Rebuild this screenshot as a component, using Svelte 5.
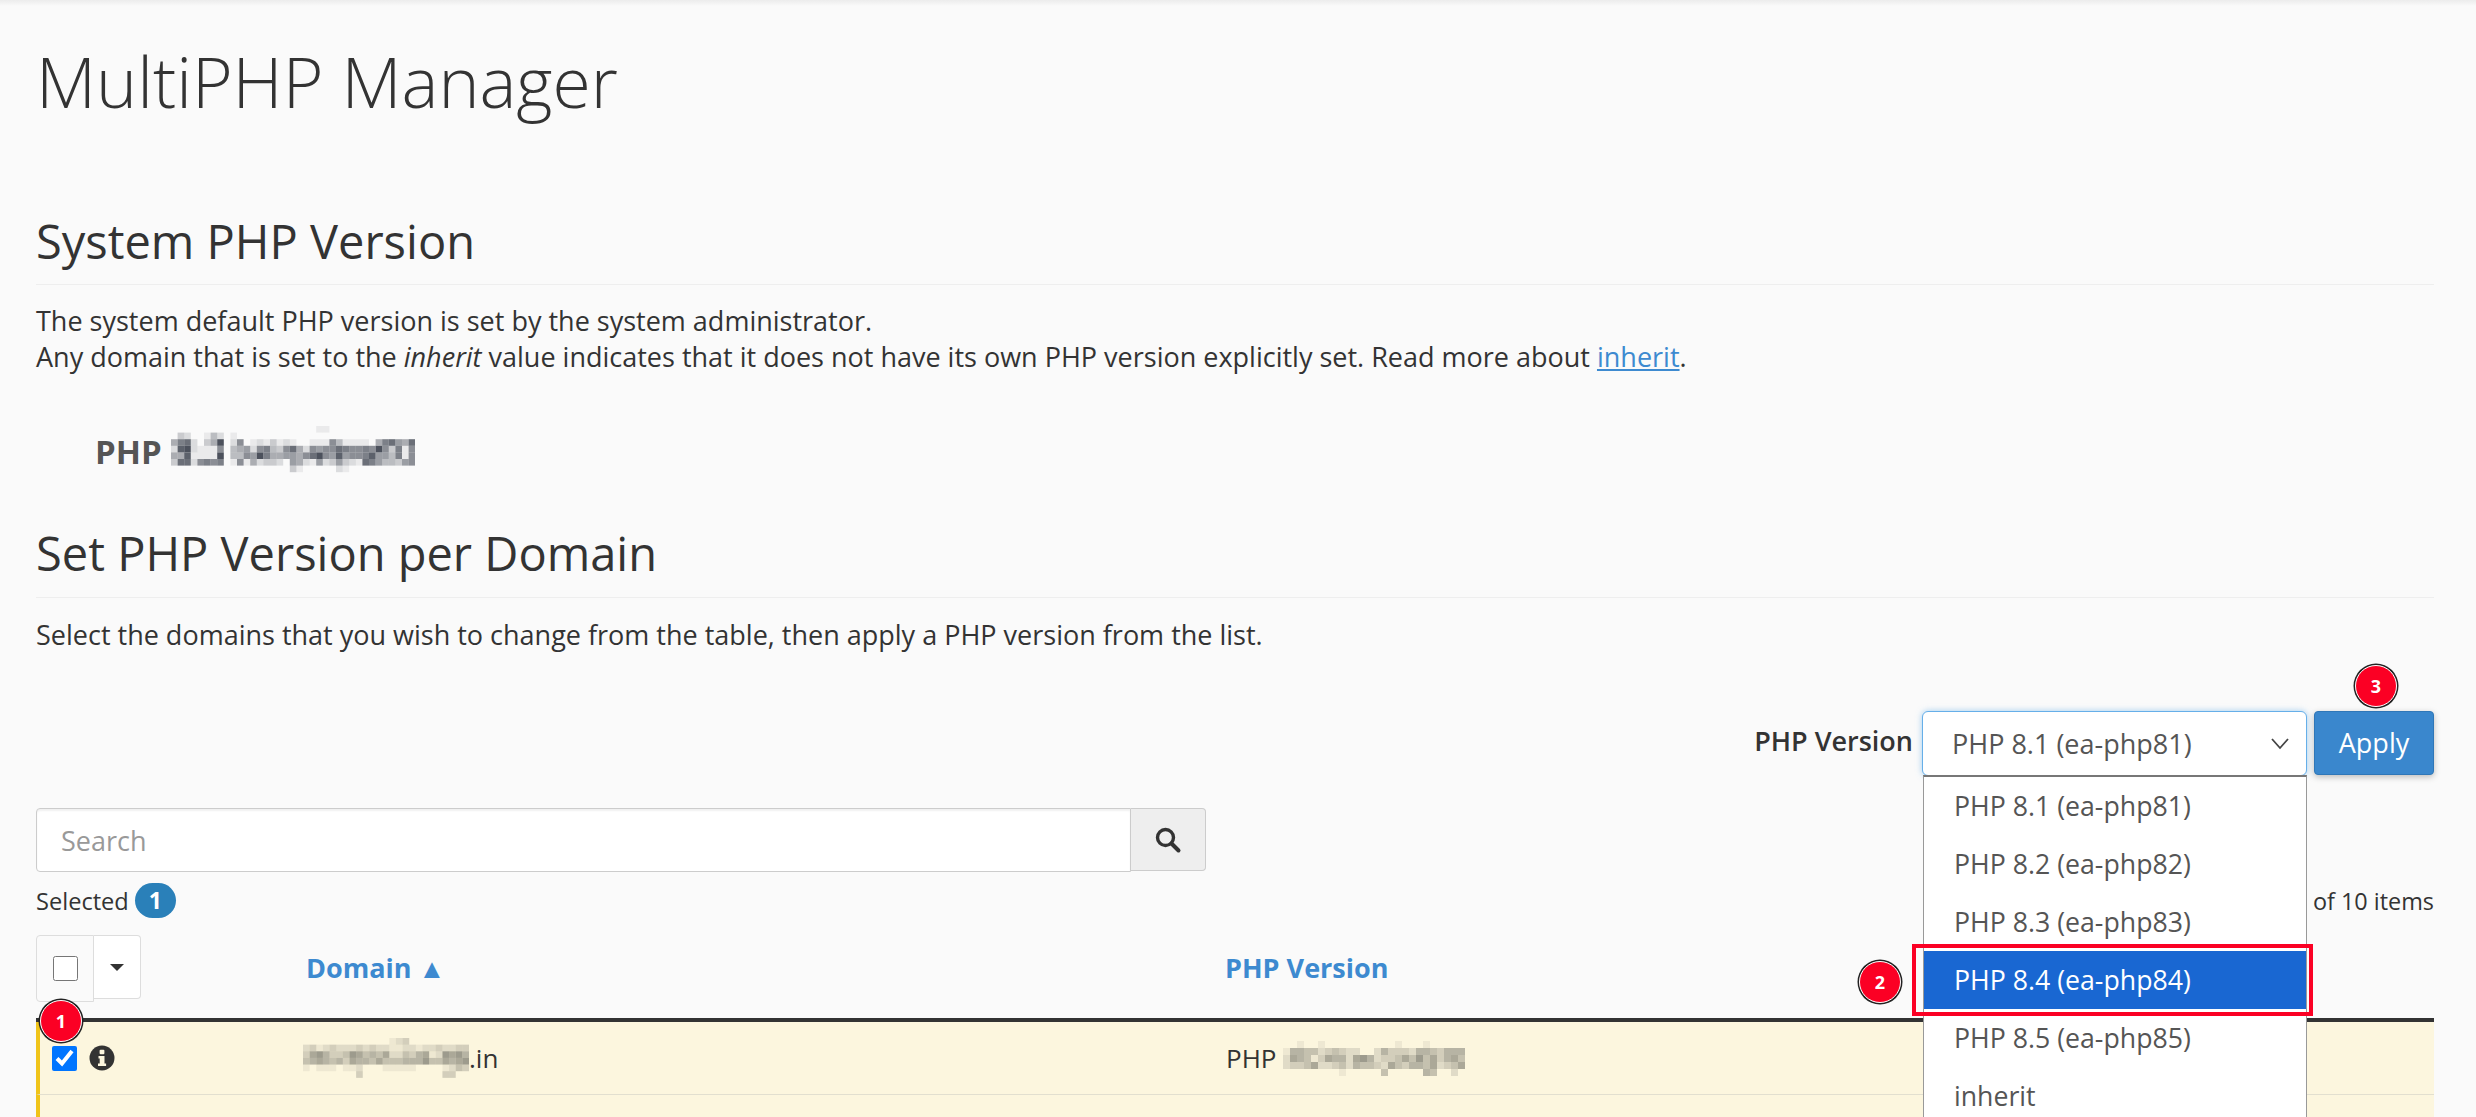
<script lang="ts">
  // pixelated (redacted) text, one hex digit of darkness per cell
  const mosaicVersion = [
    "0000000000000000000000110000000000000",
    "0320014201000000000000000000000000000",
    "5892035c02701213121001117411110589659",
    "2ab2111704562784379527677987787b738178",
    "55a1111c04476b85566579b76a6778a6648173",
    "3992787801715233206521623632198644367",
    "0000000000000000003100000210000000000",
  ];
  const mosaicDomain = [
    "0000000000000123000000000",
    "2312322232322112212232233",
    "3675334764546224356127675",
    "4565453655464445557446567",
    "1011101120001111100001243",
    "0000000030000000000003300",
  ];
  const mosaicPhp = [
    "00100100000000001000100000",
    "15544234322002533325543555",
    "26541365526752334647463564",
    "23346223425443264355462346",
    "00000000100000400000540020",
  ];
  const versions = ["PHP 8.1 (ea-php81)", "PHP 8.2 (ea-php82)", "PHP 8.3 (ea-php83)", "PHP 8.4 (ea-php84)", "PHP 8.5 (ea-php85)", "inherit"];
</script>

{#snippet mosaic(rows, cell, tint, cls)}
  <svg class={cls} width={rows[0].length * cell} height={rows.length * cell} aria-hidden="true">
    {#each rows as row, y}
      {#each row.split("") as d, x}
        {#if d !== "0"}
          <rect x={x * cell} y={y * cell} width={cell} height={cell} fill={tint} fill-opacity={Math.min(1, parseInt(d, 16) / 11)} />
        {/if}
      {/each}
    {/each}
  </svg>
{/snippet}

<div class="page">
  <h1>MultiPHP Manager</h1>

  <h2 class="first">System PHP Version</h2>
  <p class="lead">
    The system default PHP version is set by the system administrator.<br />
    Any domain that is set to the <em>inherit</em> value indicates that it does not have its own PHP version explicitly set. Read more about <a href="#inherit">inherit</a>.
  </p>
  <div class="current">PHP {@render mosaic(mosaicVersion, 6.6, "#4c515c", "blur-a")}</div>

  <h2 class="second">Set PHP Version per Domain</h2>
  <p class="hint">Select the domains that you wish to change from the table, then apply a PHP version from the list.</p>

  <div class="toolbar">
    <span class="label">PHP Version</span>
    <div class="select">
      <span>PHP 8.1 (ea-php81)</span>
      <svg width="20" height="14" viewBox="0 0 20 14"><path d="M2 2l8 9 8-9" fill="none" stroke="#444" stroke-width="1.8" /></svg>
      <ul class="options">
        {#each versions as v, i}
          <li class:active={i === 3}>{v}</li>
        {/each}
        <li class="mark"></li>
      </ul>
      <span class="step step-2">2</span>
    </div>
    <button class="apply">Apply<span class="step step-3">3</span></button>
  </div>

  <div class="search">
    <input type="text" placeholder="Search" />
    <span class="addon">
      <svg width="28" height="28" viewBox="0 0 28 28"><circle cx="11.5" cy="11.5" r="8" fill="none" stroke="#333" stroke-width="3.4" /><path d="M17.5 17.5l7 7" stroke="#333" stroke-width="4" stroke-linecap="round" /></svg>
    </span>
  </div>

  <div class="status">
    <div class="selected">Selected <span class="pill">1</span></div>
    <div class="count">Showing 1 to 10 of 10 items</div>
  </div>

  <div class="table-head">
    <div class="bulk">
      <span class="bulk-check"><input type="checkbox" /></span>
      <span class="bulk-menu"><i class="caret"></i></span>
    </div>
    <div class="col">Domain ▲</div>
    <div class="col">PHP Version</div>
  </div>

  <div class="row">
    <div class="cell-check">
      <input type="checkbox" checked />
      <svg width="26" height="26" viewBox="0 0 26 26"><circle cx="13" cy="13" r="12.5" fill="#333" /><rect x="10.6" y="4.8" width="4.8" height="4.4" rx="1" fill="#fcf6de" /><path d="M9.5 11h6v7.4h1.6v2.6H9v-2.6h1.7v-4.8H9.5z" fill="#fcf6de" /></svg>
      <span class="step step-1">1</span>
    </div>
    <div class="cell-domain">{@render mosaic(mosaicDomain, 6.64, "#66665e", "blur-b")}<span>.in</span></div>
    <div class="cell-php">PHP {@render mosaic(mosaicPhp, 7, "#66665e", "blur-c")}</div>
  </div>
  <div class="row"></div>
</div>

<style>
  :global(body) {
    margin: 0;
    background: #fafafa;
  }

  .page {
    box-sizing: border-box;
    height: 1117px;
    overflow: hidden;
    padding: 0 42px 0 36px;
    background: linear-gradient(#ececec, #fafafa 6px);
    color: #333;
    font-family: "Open Sans", sans-serif;
    font-size: 27px;
    line-height: 36px;
  }

  h1 {
    margin: 0;
    padding-top: 41px;
    font-size: 69.6px;
    font-weight: 300;
    line-height: 80px;
  }

  h2 {
    margin: 0;
    padding-bottom: 18px;
    border-bottom: 1px solid #eee;
    font-size: 47px;
    font-weight: 400;
    line-height: 50px;
  }

  .first {
    margin-top: 95px;
  }

  .second {
    margin-top: 58px;
    padding-bottom: 19px;
  }

  .lead {
    margin: 18px 0 0;
  }

  a {
    color: #3d8ad0;
  }

  .current {
    display: flex;
    align-items: center;
    height: 36px;
    margin-top: 59px;
    padding-left: 59px;
    color: #555;
    font-size: 33px;
    font-weight: 700;
  }

  .blur-a {
    margin: -5px 0 0 9px;
    flex: none;
  }

  .hint {
    margin: 19px 0 0;
  }

  .toolbar {
    display: flex;
    justify-content: flex-end;
    align-items: flex-start;
    height: 64px;
    margin-top: 58px;
  }

  .label {
    margin-right: 9px;
    padding-top: 12px;
    font-weight: 600;
  }

  .select {
    box-sizing: border-box;
    position: relative;
    display: flex;
    justify-content: space-between;
    align-items: center;
    width: 385px;
    height: 65px;
    padding: 0 16px 0 29px;
    border: 1px solid #66afe9;
    border-radius: 6px;
    background: #fff;
    box-shadow: 0 0 6px rgba(102, 175, 233, 0.6);
    color: #555;
  }

  .options {
    box-sizing: border-box;
    position: absolute;
    top: 63px;
    left: 0;
    width: 384px;
    height: 380px;
    margin: 0;
    padding: 0;
    border: 1px solid #999;
    border-top: 2px solid #777;
    background: #fff;
    list-style: none;
    z-index: 2;
  }

  .options li {
    height: 58px;
    padding-left: 30px;
    font-size: 26.7px;
    line-height: 58px;
  }

  .options .active {
    background: #1967d2;
    color: #fff;
  }

  .options .mark {
    position: absolute;
    top: 167px;
    left: -12px;
    width: 393px;
    height: 64px;
    padding: 0;
    border: 4px solid #fb0024;
  }

  .apply {
    position: relative;
    width: 120px;
    height: 64px;
    margin-left: 7px;
    padding: 0;
    border: 1px solid #2f77b8;
    border-radius: 4px;
    background: #3a87cd;
    box-shadow: 0 2px 6px rgba(0, 0, 0, 0.25);
    color: #fff;
    font: inherit;
  }

  .step {
    box-sizing: border-box;
    position: absolute;
    z-index: 3;
    display: flex;
    align-items: center;
    justify-content: center;
    width: 42px;
    height: 42px;
    border: 1px solid #fff;
    border-radius: 50%;
    background: #fb0024;
    box-shadow: 0 0 0 1.5px #222;
    color: #fff;
    font-size: 18px;
    font-weight: 700;
    line-height: 1;
  }

  .step-1 {
    top: -45px;
    left: 0;
  }

  .step-2 {
    top: 249px;
    left: -64px;
  }

  .step-3 {
    top: -47px;
    left: 40px;
  }

  .search {
    display: flex;
    width: 1170px;
    margin-top: 33px;
  }

  .search input {
    box-sizing: border-box;
    flex: 1;
    height: 64px;
    padding: 0 24px;
    border: 1px solid #ccc;
    border-radius: 4px 0 0 4px;
    background: #fff;
    box-shadow: inset 0 2px 2px rgba(0, 0, 0, 0.06);
    color: #555;
    font: inherit;
  }

  .search input::placeholder {
    color: #999;
    opacity: 1;
  }

  .addon {
    box-sizing: border-box;
    display: flex;
    align-items: center;
    justify-content: center;
    width: 75px;
    height: 63px;
    border: 1px solid #ccc;
    border-left: 0;
    border-radius: 0 4px 4px 0;
    background: #eee;
  }

  .status {
    display: flex;
    justify-content: space-between;
    align-items: center;
    height: 35px;
    margin-top: 11px;
  }

  .selected {
    display: flex;
    align-items: center;
    gap: 6px;
    font-size: 23.6px;
    font-weight: 500;
  }

  .pill {
    width: 41px;
    height: 35px;
    border-radius: 18px;
    background: #2a80b9;
    color: #fff;
    font-size: 23px;
    font-weight: 700;
    line-height: 35px;
    text-align: center;
  }

  .count {
    font-size: 23.4px;
  }

  .table-head {
    display: grid;
    grid-template-columns: 270px 919px 1fr;
    height: 83px;
    margin-top: 17px;
    border-bottom: 4px solid #333;
  }

  .bulk {
    display: flex;
    align-items: flex-start;
  }

  .bulk-check {
    box-sizing: border-box;
    display: flex;
    align-items: center;
    justify-content: center;
    width: 58px;
    height: 67px;
    border: 1px solid #ddd;
    border-radius: 4px 0 0 4px;
    background: #fafafa;
  }

  .bulk-menu {
    box-sizing: border-box;
    display: flex;
    align-items: center;
    justify-content: center;
    width: 47px;
    height: 64px;
    border: 1px solid #ddd;
    border-left: 0;
    border-radius: 0 4px 4px 0;
    background: #fff;
  }

  .caret {
    border-top: 7px solid #333;
    border-left: 7px solid transparent;
    border-right: 7px solid transparent;
  }

  input[type="checkbox"] {
    flex: none;
    width: 25px;
    height: 25px;
    margin: 0;
  }

  .col {
    padding-top: 15px;
    color: #3d8ad0;
    font-weight: 700;
  }

  .row {
    box-sizing: border-box;
    display: grid;
    grid-template-columns: 263px 923px 1fr;
    align-items: center;
    height: 73px;
    border-left: 4px solid #f0c419;
    border-bottom: 1px solid #e2dfcf;
    background: #fcf6de;
    font-size: 26px;
  }

  .cell-check {
    position: relative;
    display: flex;
    align-items: center;
    gap: 12px;
    padding-left: 12px;
  }

  .cell-domain {
    display: flex;
    align-items: center;
  }

  .cell-php {
    display: flex;
    align-items: center;
  }

  .blur-b,
  .blur-c {
    flex: none;
  }

  .blur-c {
    margin-left: 7px;
  }
</style>
